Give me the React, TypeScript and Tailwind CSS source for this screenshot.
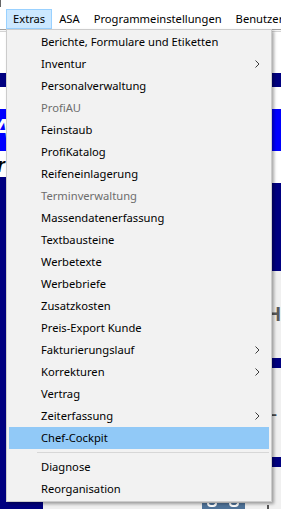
type MenuItem =
  | { label: string; sub?: boolean; disabled?: boolean; active?: boolean }
  | "sep";

const items: MenuItem[] = [
  { label: "Berichte, Formulare und Etiketten" },
  { label: "Inventur", sub: true },
  { label: "Personalverwaltung" },
  { label: "ProfiAU", disabled: true },
  { label: "Feinstaub" },
  { label: "ProfiKatalog" },
  { label: "Reifeneinlagerung" },
  { label: "Terminverwaltung", disabled: true },
  { label: "Massendatenerfassung" },
  { label: "Textbausteine" },
  { label: "Werbetexte" },
  { label: "Werbebriefe" },
  { label: "Zusatzkosten" },
  { label: "Preis-Export Kunde" },
  { label: "Fakturierungslauf", sub: true },
  { label: "Korrekturen", sub: true },
  { label: "Vertrag" },
  { label: "Zeiterfassung", sub: true },
  { label: "Chef-Cockpit", active: true },
  "sep",
  { label: "Diagnose" },
  { label: "Reorganisation" },
];

const topMenus = ["Extras", "ASA", "Programmeinstellungen", "Benutzer"];

function Chevron() {
  return (
    <svg width="5" height="8" viewBox="0 0 5 8" className="ml-auto">
      <polyline points="0.5,0.5 4,4 0.5,7.5" fill="none" stroke="#3c3c3c" strokeWidth="1" />
    </svg>
  );
}

export default function App() {
  return (
    <div className="relative w-[281px] h-[509px] overflow-hidden bg-white text-black font-['Noto_Sans',sans-serif] text-[11.2px]">
      {/* menu bar */}
      <div className="h-[9px]">
        <div className="w-px h-[7px] bg-[#666]" />
      </div>
      <nav className="flex h-[20px] pl-[6px] whitespace-nowrap">
        {topMenus.map((m, i) => (
          <div
            key={m}
            className={
              i === 0
                ? "px-[6px] border border-[#99d1ff] bg-[#cce8ff] leading-[18px]"
                : "px-[6px] border border-transparent leading-[18px]"
            }
          >
            {m}
          </div>
        ))}
      </nav>
      <div className="h-px bg-[#a0a0a0]" />
      <div className="h-px bg-[#f7f7f7]" />
      <div className="h-px bg-[#d4d4d4]" />

      {/* app window behind the menu */}
      <div className="h-[41px]" />
      <div className="h-[14px] bg-[#000080]" />
      <div className="h-[22px] bg-white" />
      <div className="h-[42px] bg-[#0000ff] overflow-hidden">
        <div className="-ml-[8px] mt-[6px] text-white font-bold italic text-[28px] leading-none font-['Liberation_Sans',sans-serif]">
          A
        </div>
      </div>
      <div className="h-[26px] bg-white overflow-hidden">
        <div className="-ml-[3px] mt-[4px] font-bold italic text-[20px] leading-none font-['Liberation_Sans',sans-serif]">
          r
        </div>
      </div>
      <div className="flex h-[332px]">
        <div className="w-[48px] bg-[#000080]" />
        <div className="flex-1 flex flex-col">
          <div className="h-[6px] bg-white" />
          <div className="h-[88px] bg-[#000080]" />
          <div className="h-[87px] bg-[#f0f0f0] overflow-hidden">
            <div className="ml-[224px] mt-[33px] text-[#5a5a5a] font-bold text-[20px] leading-none font-['Liberation_Sans',sans-serif]">
              H
            </div>
          </div>
          <div className="h-[10px] bg-[#000080]" />
          <div className="h-[89px] bg-[#f0f0f0] overflow-hidden">
            <div className="ml-[224px] mt-[34px] text-[#4a4a4a] font-bold text-[17px] leading-none font-['Liberation_Sans',sans-serif]">
              L
            </div>
          </div>
          <div className="h-[10px] bg-[#000080]" />
          <div className="flex-1 bg-[#f0f0f0] flex items-end">
            <div className="ml-[159px] w-[43px] h-[6px] bg-[#4f7399] flex justify-around items-start">
              <div className="w-[10px] h-[4px] rounded-b-full border-x-2 border-b-2 border-white" />
              <div className="w-[10px] h-[4px] rounded-b-full border-x-2 border-b-2 border-white" />
            </div>
            <div className="ml-[22px] w-[9px] h-[5px] flex items-end">
              <div className="w-[2px] h-[4px] bg-[#555]" />
            </div>
          </div>
        </div>
      </div>

      {/* dropdown */}
      <div className="absolute left-[6px] top-[29px] w-[266px] border border-[#cccccc] bg-[#f2f2f2] py-px px-[2px] shadow-[2px_2px_3px_rgba(0,0,0,0.35)]">
        {items.map((it, i) =>
          it === "sep" ? (
            <div key={i} className="h-[7px] flex items-center pl-[28px]">
              <div className="h-px flex-1 bg-[#d7d7d7]" />
            </div>
          ) : (
            <div
              key={i}
              className={
                "h-[22px] flex items-center pl-[32px] pr-[9px] whitespace-nowrap " +
                (it.active ? "bg-[#91c9f7] " : "") +
                (it.disabled ? "text-[#6d6d6d]" : "text-black")
              }
            >
              <span>{it.label}</span>
              {it.sub && <Chevron />}
            </div>
          )
        )}
      </div>
    </div>
  );
}
